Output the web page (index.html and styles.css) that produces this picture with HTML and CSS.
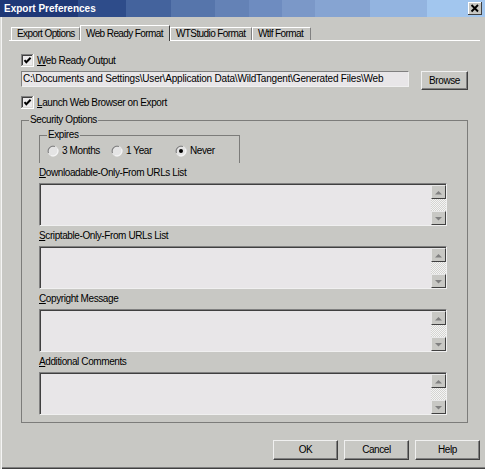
FILE: index.html
```html
<!DOCTYPE html>
<html>
<head>
<meta charset="utf-8">
<link rel="stylesheet" href="styles.css">
</head>
<body>
<div class="win">
  <div class="titlebar">
    <span class="title">Export Preferences</span>
    <span class="close"><svg width="14" height="13" viewBox="0 0 14 13"><path d="M3.5 3L10 9.5M10 3L3.5 9.5" stroke="#000" stroke-width="1.9"/></svg></span>
  </div>
  <div class="tabs">
    <div class="tab t1">Export Options</div>
    <div class="tab t2 sel">Web Ready Format</div>
    <div class="tab t3">WTStudio Format</div>
    <div class="tab t4">Wtlf Format</div>
  </div>
  <div class="content">
    <div class="check">
      <svg class="cb" width="13" height="13" viewBox="0 0 13 13"><rect x="0" y="0" width="13" height="13" fill="#fff"/><rect x="0" y="0" width="12" height="12" fill="#808080"/><rect x="1" y="1" width="11" height="11" fill="#d8d8d4"/><rect x="1" y="1" width="10" height="10" fill="#404040"/><rect x="2" y="2" width="9" height="9" fill="#ecebec"/><path d="M3.5 6.2L5.3 8.2L9.6 3.8" fill="none" stroke="#000" stroke-width="2"/></svg>
      <span><u>W</u>eb Ready Output</span>
    </div>
    <div class="pathrow">
      <div class="input">C:\Documents and Settings\User\Application Data\WildTangent\Generated Files\Web</div>
      <div class="btn browse">Browse</div>
    </div>
    <div class="check check2">
      <svg class="cb" width="13" height="13" viewBox="0 0 13 13"><rect x="0" y="0" width="13" height="13" fill="#fff"/><rect x="0" y="0" width="12" height="12" fill="#808080"/><rect x="1" y="1" width="11" height="11" fill="#d8d8d4"/><rect x="1" y="1" width="10" height="10" fill="#404040"/><rect x="2" y="2" width="9" height="9" fill="#ecebec"/><path d="M3.5 6.2L5.3 8.2L9.6 3.8" fill="none" stroke="#000" stroke-width="2"/></svg>
      <span><u>L</u>aunch Web Browser on Export</span>
    </div>
    <fieldset class="group sec">
      <legend>Security Options</legend>
      <div class="secbody">
        <fieldset class="group exp">
          <legend>Expires</legend>
          <div class="radios">
            <div class="radio">
              <svg width="12" height="12" viewBox="0 0 12 12"><circle cx="6" cy="6" r="5.5" fill="#e4e4e4"/><path d="M1.5 8A5 5 0 0 1 8 1.5" fill="none" stroke="#808080" stroke-width="1.2"/><path d="M10.5 4A5 5 0 0 1 4 10.5" fill="none" stroke="#f4f4f4" stroke-width="1.2"/></svg>
              <span>3 Months</span>
            </div>
            <div class="radio">
              <svg width="12" height="12" viewBox="0 0 12 12"><circle cx="6" cy="6" r="5.5" fill="#e4e4e4"/><path d="M1.5 8A5 5 0 0 1 8 1.5" fill="none" stroke="#808080" stroke-width="1.2"/><path d="M10.5 4A5 5 0 0 1 4 10.5" fill="none" stroke="#f4f4f4" stroke-width="1.2"/></svg>
              <span>1 Year</span>
            </div>
            <div class="radio">
              <svg width="12" height="12" viewBox="0 0 12 12"><circle cx="6" cy="6" r="5.5" fill="#e4e4e4"/><path d="M1.5 8A5 5 0 0 1 8 1.5" fill="none" stroke="#808080" stroke-width="1.2"/><path d="M10.5 4A5 5 0 0 1 4 10.5" fill="none" stroke="#f4f4f4" stroke-width="1.2"/><circle cx="6" cy="6" r="2" fill="#000"/></svg>
              <span>Never</span>
            </div>
          </div>
        </fieldset>

        <div class="lbl"><u>D</u>ownloadable-Only-From URLs List</div>
        <div class="ta">
          <div class="sb">
            <div class="sbtn"><svg width="13" height="13" viewBox="0 0 13 13"><path d="M3 8.5L6.5 5L10 8.5Z" fill="#808080"/></svg></div>
            <div class="track"></div>
            <div class="sbtn"><svg width="13" height="13" viewBox="0 0 13 13"><path d="M3 5L6.5 8.5L10 5Z" fill="#808080"/></svg></div>
          </div>
        </div>

        <div class="lbl"><u>S</u>criptable-Only-From URLs List</div>
        <div class="ta">
          <div class="sb">
            <div class="sbtn"><svg width="13" height="13" viewBox="0 0 13 13"><path d="M3 8.5L6.5 5L10 8.5Z" fill="#808080"/></svg></div>
            <div class="track"></div>
            <div class="sbtn"><svg width="13" height="13" viewBox="0 0 13 13"><path d="M3 5L6.5 8.5L10 5Z" fill="#808080"/></svg></div>
          </div>
        </div>

        <div class="lbl"><u>C</u>opyright Message</div>
        <div class="ta">
          <div class="sb">
            <div class="sbtn"><svg width="13" height="13" viewBox="0 0 13 13"><path d="M3 8.5L6.5 5L10 8.5Z" fill="#808080"/></svg></div>
            <div class="track"></div>
            <div class="sbtn"><svg width="13" height="13" viewBox="0 0 13 13"><path d="M3 5L6.5 8.5L10 5Z" fill="#808080"/></svg></div>
          </div>
        </div>

        <div class="lbl"><u>A</u>dditional Comments</div>
        <div class="ta">
          <div class="sb">
            <div class="sbtn"><svg width="13" height="13" viewBox="0 0 13 13"><path d="M3 8.5L6.5 5L10 8.5Z" fill="#808080"/></svg></div>
            <div class="track"></div>
            <div class="sbtn"><svg width="13" height="13" viewBox="0 0 13 13"><path d="M3 5L6.5 8.5L10 5Z" fill="#808080"/></svg></div>
          </div>
        </div>
      </div>
    </fieldset>
  </div>
  <div class="footer">
    <div class="btn">OK</div>
    <div class="btn">Cancel</div>
    <div class="btn">Help</div>
  </div>
</div>
</body>
</html>
```
FILE: styles.css
```css
* { box-sizing: border-box; }
html, body { margin: 0; padding: 0; }
body {
  width: 485px;
  height: 469px;
  overflow: hidden;
  background: #c8c8c4;
  font-family: "Liberation Sans", Arial, sans-serif;
  font-size: 10px;
  letter-spacing: -0.4px;
  color: #000;
}
u { text-decoration: underline; text-underline-offset: 1px; }

.win {
  width: 485px;
  height: 469px;
  background: #c8c8c4;
  display: flex;
  flex-direction: column;
  box-shadow: inset 1px 0 #dcdcd8, inset 2px 0 #f4f4f4, inset 0 -1px #404040, inset 0 -2px #808080;
}

.titlebar {
  height: 17px;
  flex: none;
  display: flex;
  align-items: center;
  padding: 0 3px 0 4px;
  background: linear-gradient(to right,
    #1f3877 0, #1f3877 78px,
    #2e4c8a 78px, #2e4c8a 126px,
    #44639d 126px, #44639d 171px,
    #5675ab 171px, #5675ab 215px,
    #6482b6 215px, #6482b6 249px,
    #6e8cc0 249px, #6e8cc0 282px,
    #7b98c8 282px, #7b98c8 315px,
    #86a4d2 315px, #86a4d2 370px,
    #93b4e0 370px, #93b4e0 427px,
    #a2c6ee 427px, #a2c6ee 485px);
}
.title {
  color: #fff;
  font-weight: bold;
  font-size: 10px;
  letter-spacing: 0;
}
.close {
  margin-left: auto;
  width: 14px;
  height: 13px;
  background: #c8c8c4;
  box-shadow: inset -1px -1px #404040, inset 1px 1px #fff;
  display: flex;
}

.tabs {
  flex: none;
  display: flex;
  align-items: flex-end;
  height: 16px;
  margin: 8px 5px 0 9px;
  padding-left: 2px;
  border-bottom: 1px solid #fff;
}
.tab {
  height: 13px;
  padding: 0 0 0 5px;
  border-top: 1px solid #fff;
  border-left: 1px solid #fff;
  border-right: 1px solid #808080;
  line-height: 11px;
  letter-spacing: -0.6px;
  white-space: nowrap;
  overflow: hidden;
  background: #c8c8c4;
}
.t1 { width: 69px; }
.t2 { width: 90px; }
.t3 { width: 82px; }
.t4 { width: 59px; }
.tab.sel {
  height: 16px;
  margin-bottom: -1px;
  padding-top: 2px;
  border-right-color: #404040;
}

.content {
  flex: none;
  padding: 13px 0 0 21px;
  display: flex;
  flex-direction: column;
  align-items: flex-start;
}
.check {
  display: flex;
  align-items: center;
  gap: 3px;
  height: 13px;
  line-height: 13px;
  white-space: nowrap;
}
.cb { flex: none; display: block; }
.check2 { margin-top: 6px; }

.pathrow {
  margin-top: 4px;
  display: flex;
  align-items: flex-start;
}
.input {
  width: 388px;
  height: 16px;
  background: #e8e6e8;
  border-top: 1px solid #808080;
  border-left: 1px solid #808080;
  border-bottom: 1px solid #f0f0f0;
  border-right: 1px solid #f0f0f0;
  padding-left: 1px;
  line-height: 14px;
  letter-spacing: -0.2px;
  white-space: nowrap;
  overflow: hidden;
}
.btn {
  height: 20px;
  background: #c8c8c4;
  border-top: 1px solid #f0f0f0;
  border-left: 1px solid #f0f0f0;
  border-right: 1px solid #404040;
  border-bottom: 1px solid #404040;
  box-shadow: inset -1px -1px #808080;
  display: flex;
  align-items: center;
  justify-content: center;
  line-height: 12px;
}
.browse {
  margin-left: 12px;
  width: 47px;
  height: 19px;
}

.group {
  margin: 0;
  padding: 0;
  border: 1px solid #7c7c7a;
  min-width: 0;
}
.group legend {
  padding: 0 1px;
  line-height: 12px;
  height: 12px;
  white-space: nowrap;
}
.sec {
  margin-top: 5px;
  width: 447px;
  padding: 0 0 7px 7px;
}
.secbody {
  padding: 3px 0 0 10px;
}
.exp {
  width: 201px;
  padding: 4px 0 6px 6px;
  border-bottom: none;
}
.exp legend { margin-left: 1px; }
.radios {
  display: flex;
  height: 12px;
  margin-left: 1px;
}
.radio {
  width: 64px;
  display: flex;
  align-items: center;
  gap: 3px;
  line-height: 12px;
}
.radio svg { display: block; flex: none; }

.lbl {
  margin-top: 4px;
  height: 12px;
  line-height: 12px;
  white-space: nowrap;
}
.ta {
  margin-top: 4px;
  width: 408px;
  height: 43px;
  background: #e8e6e8;
  border-top: 1px solid #808080;
  border-left: 1px solid #808080;
  border-right: 1px solid #f0f0f0;
  border-bottom: 1px solid #f0f0f0;
  box-shadow: inset 1px 1px #404040;
  display: flex;
  justify-content: flex-end;
  padding: 1px 0 0 0;
}
.sb {
  width: 15px;
  display: flex;
  flex-direction: column;
}
.sbtn {
  height: 14px;
  flex: none;
  background: #c8c8c4;
  border-top: 1px solid #e8e8e8;
  border-left: 1px solid #e8e8e8;
  border-right: 1px solid #404040;
  border-bottom: 1px solid #404040;
  display: flex;
  align-items: center;
  justify-content: center;
}
.sbtn svg { display: block; }
.track {
  flex: 1;
  background: repeating-conic-gradient(#d4d4d0 0 25%, #f4f4f4 0 50%) 0 0 / 2px 2px;
}

.footer {
  flex: none;
  margin-top: 17px;
  display: flex;
  justify-content: flex-end;
  gap: 6px;
  padding-right: 5px;
}
.footer .btn { width: 65px; }
```
